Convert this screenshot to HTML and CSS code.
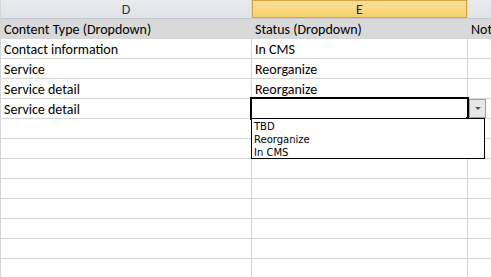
FILE: index.html
```html
<!DOCTYPE html>
<html lang="en">
<head>
  <meta charset="UTF-8" />
  <title>Content Inventory</title>
  <link rel="stylesheet" href="styles.css">
</head>
<body>
  <div class="sheet">
    <div class="col-head">D</div>
    <div class="col-head selected">E</div>
    <div class="col-head"></div>

    <div class="cell title">Content Type (Dropdown)</div>
    <div class="cell title">Status (Dropdown)</div>
    <div class="cell title">Notes</div>

    <div class="cell">Contact information</div>
    <div class="cell">In CMS</div>
    <div class="cell"></div>

    <div class="cell">Service</div>
    <div class="cell">Reorganize</div>
    <div class="cell"></div>

    <div class="cell">Service detail</div>
    <div class="cell">Reorganize</div>
    <div class="cell"></div>

    <div class="cell">Service detail</div>
    <div class="cell active">
      <span class="fill-handle"></span>
      <span class="drop-btn"><span class="arrow"></span></span>
      <ul class="drop-list">
        <li>TBD</li>
        <li>Reorganize</li>
        <li>In CMS</li>
      </ul>
    </div>
    <div class="cell"></div>

    <div class="cell"></div><div class="cell"></div><div class="cell"></div>
    <div class="cell"></div><div class="cell"></div><div class="cell"></div>
    <div class="cell"></div><div class="cell"></div><div class="cell"></div>
    <div class="cell"></div><div class="cell"></div><div class="cell"></div>
    <div class="cell"></div><div class="cell"></div><div class="cell"></div>
    <div class="cell"></div><div class="cell"></div><div class="cell"></div>
    <div class="cell"></div><div class="cell"></div><div class="cell"></div>
    <div class="cell"></div><div class="cell"></div><div class="cell"></div>
  </div>
</body>
</html>
```

FILE: styles.css
```css
:root {
  --grid: #d6d6d6;
  --title: #d9d9d9;
  --head: #e4e7eb;
}

html, body {
  margin: 0;
  padding: 0;
  background: #fff;
  overflow: hidden;
}

.sheet {
  display: grid;
  grid-template-columns: 250px 215px 1fr;
  grid-template-rows: 18px;
  grid-auto-rows: 19px;
  gap: 1px;
  padding-left: 1px;
  background: var(--grid);
  width: 490px;
  height: 277px;
  font-family: Carlito, "Liberation Sans", Arial, sans-serif;
  font-size: 14px;
  color: #000;
}

.col-head {
  background: linear-gradient(#e9ebee, #e0e3e7);
  color: #333;
  text-align: center;
  line-height: 19px;
  box-shadow: 0 1px 0 #c4c8cd;
}

.col-head.selected {
  background: linear-gradient(#fbe39f, #f6cf68);
  box-shadow: inset 0 0 0 1px #d9a441, 0 1px 0 #c4c8cd;
  color: #222;
}

.cell {
  background: #fff;
  line-height: 19px;
  padding: 1px 3px 0;
  white-space: nowrap;
  overflow: hidden;
}

.title {
  background: var(--title);
}

.title + .title {
  box-shadow: -1px 0 0 var(--title);
}

.active {
  position: relative;
  overflow: visible;
  outline: 2px solid #000;
  outline-offset: 0;
  z-index: 2;
}

.fill-handle {
  position: absolute;
  right: -3px;
  bottom: -3px;
  width: 4px;
  height: 4px;
  background: #000;
  border: 1px solid #fff;
  border-width: 0 0 0 0;
}

.drop-btn {
  position: absolute;
  left: calc(100% + 2px);
  top: 0;
  width: 15px;
  height: 17px;
  background: #e6e7e9;
  border: 1px solid #9d9fa3;
  display: flex;
  align-items: center;
  justify-content: center;
}

.arrow {
  width: 0;
  height: 0;
  border-left: 3px solid transparent;
  border-right: 3px solid transparent;
  border-top: 3px solid #555;
}

.drop-list {
  position: absolute;
  left: -1px;
  top: 19px;
  width: 230px;
  height: 38px;
  margin: 0;
  padding: 1px 0 0 2px;
  list-style: none;
  background: #fff;
  border: 1px solid #000;
  font-family: "DejaVu Sans", "Liberation Sans", sans-serif;
  font-size: 10px;
  line-height: 13px;
}
```
